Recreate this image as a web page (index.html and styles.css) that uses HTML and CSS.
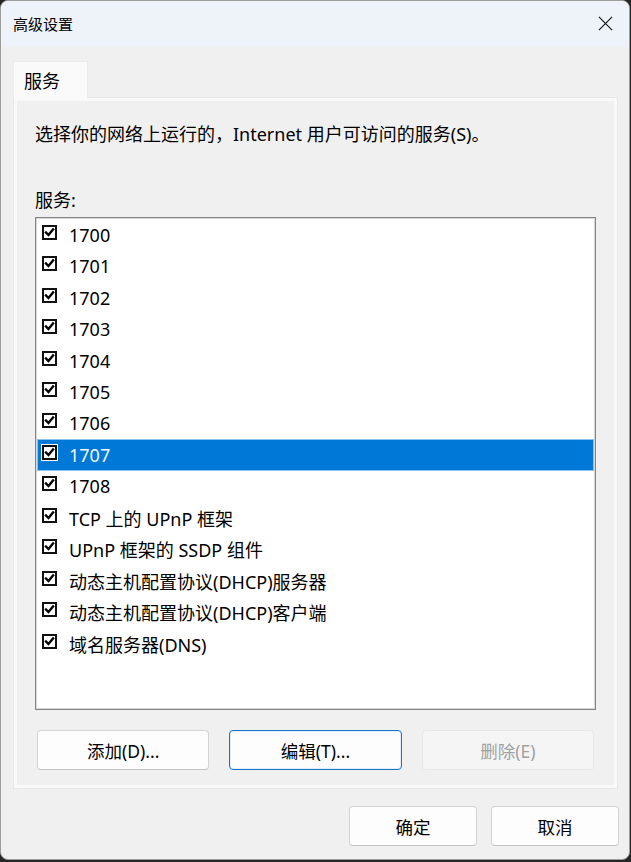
FILE: index.html
```html
<!DOCTYPE html>
<html lang="zh-CN">
<head>
<meta charset="utf-8">
<title>高级设置</title>
<link rel="stylesheet" href="styles.css">
</head>
<body>
<div class="window">
  <div class="titlebar">
    <span class="title">高级设置</span>
    <svg class="close" width="16" height="16" viewBox="0 0 16 16"><path d="M1 1 L15 15 M15 1 L1 15" stroke="#1b1b1b" stroke-width="1.3" fill="none"/></svg>
  </div>
  <div class="body">
    <div class="tabs"><div class="tab">服务</div></div>
    <div class="panel">
      <p class="desc">选择你的网络上运行的，Internet 用户可访问的服务(S)。</p>
      <p class="label">服务:</p>
      <div class="listbox">
        <div class="row"><span class="cb"><svg viewBox="0 0 12 12"><path d="M2.2 6 L4.9 8.8 L9.9 2.6"/></svg></span><span>1700</span></div>
        <div class="row"><span class="cb"><svg viewBox="0 0 12 12"><path d="M2.2 6 L4.9 8.8 L9.9 2.6"/></svg></span><span>1701</span></div>
        <div class="row"><span class="cb"><svg viewBox="0 0 12 12"><path d="M2.2 6 L4.9 8.8 L9.9 2.6"/></svg></span><span>1702</span></div>
        <div class="row"><span class="cb"><svg viewBox="0 0 12 12"><path d="M2.2 6 L4.9 8.8 L9.9 2.6"/></svg></span><span>1703</span></div>
        <div class="row"><span class="cb"><svg viewBox="0 0 12 12"><path d="M2.2 6 L4.9 8.8 L9.9 2.6"/></svg></span><span>1704</span></div>
        <div class="row"><span class="cb"><svg viewBox="0 0 12 12"><path d="M2.2 6 L4.9 8.8 L9.9 2.6"/></svg></span><span>1705</span></div>
        <div class="row"><span class="cb"><svg viewBox="0 0 12 12"><path d="M2.2 6 L4.9 8.8 L9.9 2.6"/></svg></span><span>1706</span></div>
        <div class="row selected"><span class="cb"><svg viewBox="0 0 12 12"><path d="M2.2 6 L4.9 8.8 L9.9 2.6"/></svg></span><span>1707</span></div>
        <div class="row"><span class="cb"><svg viewBox="0 0 12 12"><path d="M2.2 6 L4.9 8.8 L9.9 2.6"/></svg></span><span>1708</span></div>
        <div class="row"><span class="cb"><svg viewBox="0 0 12 12"><path d="M2.2 6 L4.9 8.8 L9.9 2.6"/></svg></span><span>TCP 上的 UPnP 框架</span></div>
        <div class="row"><span class="cb"><svg viewBox="0 0 12 12"><path d="M2.2 6 L4.9 8.8 L9.9 2.6"/></svg></span><span>UPnP 框架的 SSDP 组件</span></div>
        <div class="row"><span class="cb"><svg viewBox="0 0 12 12"><path d="M2.2 6 L4.9 8.8 L9.9 2.6"/></svg></span><span>动态主机配置协议(DHCP)服务器</span></div>
        <div class="row"><span class="cb"><svg viewBox="0 0 12 12"><path d="M2.2 6 L4.9 8.8 L9.9 2.6"/></svg></span><span>动态主机配置协议(DHCP)客户端</span></div>
        <div class="row"><span class="cb"><svg viewBox="0 0 12 12"><path d="M2.2 6 L4.9 8.8 L9.9 2.6"/></svg></span><span>域名服务器(DNS)</span></div>
      </div>
      <div class="btnrow">
        <button class="btn">添加(D)...</button>
        <button class="btn focus">编辑(T)...</button>
        <button class="btn disabled">删除(E)</button>
      </div>
    </div>
    <div class="footer">
      <button class="btn small">确定</button>
      <button class="btn small">取消</button>
    </div>
  </div>
</div>
</body>
</html>
```

FILE: styles.css
```css
html, body {
  margin: 0;
  padding: 0;
}
body {
  background: #262626;
  width: 631px;
  height: 862px;
  overflow: hidden;
  font-family: "Noto Sans", "Noto Sans CJK SC", sans-serif;
  color: #000;
}
.window {
  width: 630px;
  height: 860px;
  box-sizing: border-box;
  border: 1px solid #9c9c9c;
  border-radius: 8px;
  background: #f0f0f0;
  overflow: hidden;
  display: flex;
  flex-direction: column;
}
.titlebar {
  height: 46px;
  background: #eef2f9;
  display: flex;
  align-items: center;
  justify-content: space-between;
  padding: 0 16px 0 12px;
  flex: none;
}
.title {
  font-size: 15px;
  font-family: "Noto Sans CJK SC", sans-serif;
  line-height: 20px;
  margin-top: -1px;
}
.close {
  width: 15px;
  height: 15px;
  margin-top: -1px;
}
.body {
  padding: 14px 11px 0 12px;
  display: flex;
  flex-direction: column;
}
.tabs {
  display: flex;
  height: 36px;
}
.tab {
  width: 75px;
  box-sizing: border-box;
  background: #fafafa;
  border: 1px solid #ececec;
  border-bottom: none;
  font-family: "Noto Sans CJK SC", sans-serif;
  font-size: 18px;
  line-height: 36px;
  padding-left: 10px;
  position: relative;
  z-index: 1;
  margin-bottom: -1px;
}
.panel {
  height: 692px;
  box-sizing: border-box;
  border: 1px solid #e7e7e7;
  box-shadow: inset 0 0 0 3px #f9f9f9;
  padding: 0 21px 0 21px;
  display: flex;
  flex-direction: column;
}
.desc, .label {
  margin: 0;
  font-size: 18px;
  line-height: 24px;
  white-space: nowrap;
}
.desc {
  margin-top: 24px;
}
.label {
  margin-top: 42px;
}
.listbox {
  margin-top: 5px;
  height: 493px;
  box-sizing: border-box;
  border: 1px solid #858585;
  box-shadow: inset 0 0 0 1px #d6d6d6;
  background: #fff;
  padding: 1px;
  display: flex;
  flex-direction: column;
}
.row {
  height: 31.46px;
  flex: none;
  box-sizing: border-box;
  display: flex;
  align-items: center;
  padding-left: 5px;
  font-size: 18px;
  white-space: nowrap;
}
.cb {
  width: 15px;
  height: 15px;
  box-sizing: border-box;
  border: 2px solid #111;
  background: #fff;
  margin-right: 12px;
  margin-top: -5px;
  display: flex;
  align-items: center;
  justify-content: center;
}
.cb svg {
  width: 11px;
  height: 11px;
}
.cb svg path {
  fill: none;
  stroke: #000;
  stroke-width: 2.6;
  stroke-linecap: square;
}
.row.selected {
  background: #0078d7;
  border: 1px solid #8cc4ee;
  color: #f3f8fd;
  padding-left: 4px;
}
.row.selected .cb {
  box-shadow: 0 0 0 1px #fff;
}
.btnrow {
  margin: 20px 2px 0 2px;
  display: grid;
  grid-template-columns: repeat(3, 1fr);
  gap: 20px;
}
.btn {
  height: 40px;
  box-sizing: border-box;
  background: #fdfdfd;
  border: 1px solid #d3d3d3;
  border-bottom-color: #c2c2c2;
  border-radius: 4px;
  font-family: "Noto Sans", "Noto Sans CJK SC", sans-serif;
  font-size: 17.5px;
  color: #000;
  padding: 0;
}
.btn.focus {
  border: 1px solid #1a73c8;
  box-shadow: inset 0 0 0 1px #e2eefa;
}
.btn.disabled {
  background: #f5f5f5;
  border-color: #e6e6e6;
  color: #a2a2a2;
}
.footer {
  display: flex;
  justify-content: flex-end;
  gap: 14px;
  margin-top: 17px;
  margin-right: -1px;
}
.btn.small {
  width: 128px;
}
```
